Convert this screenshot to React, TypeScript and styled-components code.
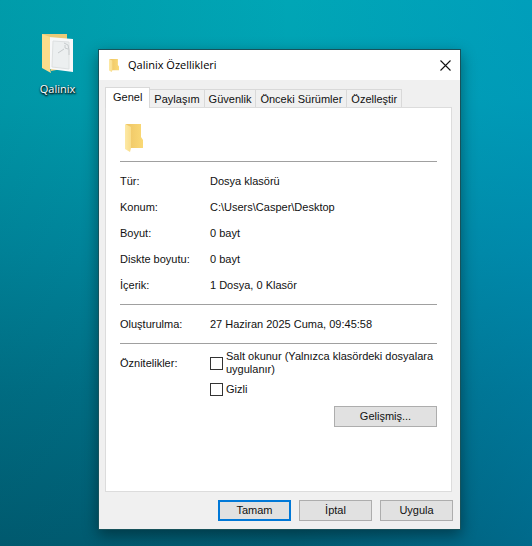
import React, { useState } from "react";
import styled, { createGlobalStyle, css } from "styled-components";

const GlobalStyle = createGlobalStyle`
  * { box-sizing: border-box; }
  body { margin: 0; }
  button, input { font: inherit; color: inherit; }
`;

const Desktop = styled.main`
  min-height: 100vh;
  display: flex;
  align-items: stretch;
  gap: 11px;
  padding: 33px 71px 16px 28px;
  font: 11px/13px "Liberation Sans", Arial, sans-serif;
  color: #111;
  background:
    linear-gradient(90deg, rgba(0, 66, 66, 0.1), rgba(0, 66, 66, 0) 55%, rgba(0, 140, 200, 0.28)),
    linear-gradient(180deg, #00a6b6 0%, #00a0b2 18%, #0088a0 46%, #007088 72%, #005c73 100%);
`;

const Shortcut = styled.button`
  flex: none;
  width: 59px;
  align-self: flex-start;
  display: flex;
  flex-direction: column;
  align-items: center;
  gap: 5px;
  padding: 0;
  border: 0;
  background: none;
  color: #fff;
  font: 11px/16px "Open Sans", "Noto Sans", sans-serif;
  text-shadow: 1px 1px 2px #000, 0 1px 2px #000;
`;

const Dialog = styled.section`
  flex: 1;
  min-width: 0;
  margin-top: 16px;
  display: flex;
  flex-direction: column;
  background: #f0f0f0;
  border: 1px solid #17525b;
  box-shadow: 0 5px 14px rgba(0, 0, 0, 0.4);
`;

const TitleBar = styled.header`
  height: 30px;
  display: flex;
  align-items: center;
  gap: 9px;
  padding: 0 9px 0 10px;
  background: #fff;
`;

const Title = styled.h1`
  flex: 1;
  margin: 0;
  font: 11px/16px "Open Sans", "Noto Sans", sans-serif;
  color: #000;
`;

const CloseButton = styled.button`
  display: flex;
  padding: 0;
  border: 0;
  background: none;
`;

const TabList = styled.div`
  display: flex;
  align-items: flex-end;
  margin: 7px 8px 0 6px;
`;

const Tab = styled.button<{ $active: boolean }>`
  height: 18px;
  padding: 1px 4px 0;
  border: 1px solid #d9d9d9;
  border-width: 1px 1px 0 0;
  background: #f0f0f0;
  white-space: nowrap;
  ${({ $active }) =>
    $active &&
    css`
      height: 21px;
      margin-bottom: -1px;
      padding: 0 7px 2px;
      border-left-width: 1px;
      background: #fff;
      z-index: 1;
    `}
`;

const Panel = styled.div`
  flex: 1;
  margin: 0 8px 0 6px;
  padding: 0 14px;
  background: #fff;
  border: 1px solid #dcdcdc;
`;

const PanelHeader = styled.div`
  height: 53px;
  display: flex;
  align-items: center;
  padding: 6px 5px 0;
`;

const Rule = styled.hr`
  height: 1px;
  margin: 0 0 6px;
  border: 0;
  background: #a0a0a0;
`;

const Details = styled.dl`
  display: grid;
  grid-template-columns: 90px 1fr;
  grid-auto-rows: 26px;
  align-items: center;
  margin: 0 0 6px;
`;

const Term = styled.dt``;

const Value = styled.dd`
  margin: 0;
`;

const Attributes = styled.fieldset`
  display: grid;
  grid-template-columns: 90px 1fr;
  margin: 0;
  padding: 0;
  border: 0;
`;

const AttributesLabel = styled.span`
  line-height: 26px;
`;

const Options = styled.div`
  display: flex;
  flex-direction: column;
`;

const Option = styled.label`
  min-height: 26px;
  display: flex;
  align-items: center;
  gap: 3px;
`;

const CheckBox = styled.input`
  appearance: none;
  flex: none;
  width: 13px;
  height: 13px;
  margin: 0;
  border: 1px solid #333;
  background: #fff;
  &:checked {
    background: #333;
    box-shadow: inset 0 0 0 2px #fff;
  }
`;

const Actions = styled.div<{ $footer?: boolean }>`
  display: flex;
  justify-content: flex-end;
  gap: 8px;
  padding: ${({ $footer }) => ($footer ? "8px 7px 8px" : "4px 0 0")};
`;

const PushButton = styled.button<{ $primary?: boolean; $wide?: boolean }>`
  width: ${({ $wide }) => ($wide ? 103 : 73)}px;
  height: 21px;
  padding: 0;
  border: ${({ $primary }) => ($primary ? "2px solid #0078d7" : "1px solid #adadad")};
  background: #e1e1e1;
`;

const FolderIcon = ({ width, height }: { width: number; height: number }) => (
  <svg width={width} height={height} viewBox="0 0 18 28" preserveAspectRatio="none" aria-hidden="true">
    <defs>
      <linearGradient id="folderBack" x1="0" x2="1">
        <stop offset="0" stopColor="#eec565" />
        <stop offset="1" stopColor="#fad976" />
      </linearGradient>
      <linearGradient id="folderFlap" x1="0" x2="1">
        <stop offset="0" stopColor="#fde9a5" />
        <stop offset="1" stopColor="#f9dd8a" />
      </linearGradient>
    </defs>
    <path d="M1 0H16V13L18 16V24H5Z" fill="url(#folderBack)" />
    <path d="M0 0 6 3V24L5 28L0 25Z" fill="url(#folderFlap)" />
  </svg>
);

const FullFolderIcon = () => (
  <svg width="34" height="43" viewBox="0 0 34 43" aria-hidden="true">
    <path d="M1 1H26V35L10 38Z" fill="#ecca78" />
    <path d="M8 4 32 6V39L9 36Z" fill="#f7f8f9" />
    <path d="M12 8 28 9V36L11 34Z" fill="#eceff0" stroke="#dde0e1" />
    <path d="M23 10 27 12 28 17V22M24 12V15L27 16M17 20 23 16" fill="none" stroke="#c6cacc" />
    <path d="M1 1 9 4V36L10 40L1 35Z" fill="#fbdc8b" />
  </svg>
);

const tabs = ["Genel", "Paylaşım", "Güvenlik", "Önceki Sürümler", "Özelleştir"];

const details = [
  ["Tür:", "Dosya klasörü"],
  ["Konum:", "C:\\Users\\Casper\\Desktop"],
  ["Boyut:", "0 bayt"],
  ["Diskte boyutu:", "0 bayt"],
  ["İçerik:", "1 Dosya, 0 Klasör"],
];

export default function App() {
  const [active, setActive] = useState(tabs[0]);
  return (
    <>
      <GlobalStyle />
      <Desktop lang="tr">
        <Shortcut>
          <FullFolderIcon />
          Qalinix
        </Shortcut>
        <Dialog role="dialog" aria-labelledby="dialog-title">
          <TitleBar>
            <FolderIcon width={10} height={13} />
            <Title id="dialog-title">Qalinix Özellikleri</Title>
            <CloseButton aria-label="Kapat">
              <svg width="11" height="11" viewBox="0 0 11 11" aria-hidden="true">
                <path d="M.5.5 10.5 10.5M10.5.5.5 10.5" stroke="#111" strokeWidth="1.1" />
              </svg>
            </CloseButton>
          </TitleBar>
          <TabList role="tablist">
            {tabs.map((tab) => (
              <Tab
                key={tab}
                role="tab"
                aria-selected={tab === active}
                $active={tab === active}
                onClick={() => setActive(tab)}
              >
                {tab}
              </Tab>
            ))}
          </TabList>
          <Panel role="tabpanel" aria-label={active}>
            <PanelHeader>
              <FolderIcon width={18} height={28} />
            </PanelHeader>
            <Rule />
            <Details>
              {details.map(([term, value]) => (
                <React.Fragment key={term}>
                  <Term>{term}</Term>
                  <Value>{value}</Value>
                </React.Fragment>
              ))}
            </Details>
            <Rule />
            <Details>
              <Term>Oluşturulma:</Term>
              <Value>27 Haziran 2025 Cuma, 09:45:58</Value>
            </Details>
            <Rule />
            <Attributes aria-labelledby="attributes-label">
              <AttributesLabel id="attributes-label">Öznitelikler:</AttributesLabel>
              <Options>
                <Option>
                  <CheckBox type="checkbox" />
                  Salt okunur (Yalnızca klasördeki dosyalara uygulanır)
                </Option>
                <Option>
                  <CheckBox type="checkbox" />
                  Gizli
                </Option>
              </Options>
            </Attributes>
            <Actions>
              <PushButton $wide>Gelişmiş...</PushButton>
            </Actions>
          </Panel>
          <Actions $footer>
            <PushButton $primary>Tamam</PushButton>
            <PushButton>İptal</PushButton>
            <PushButton>Uygula</PushButton>
          </Actions>
        </Dialog>
      </Desktop>
    </>
  );
}
